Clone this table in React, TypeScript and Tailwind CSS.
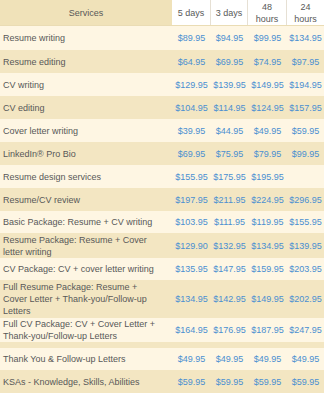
import React from "react";

type Row = { name: React.ReactNode; prices: string[]; h: string };

const rows: Row[] = [
  { name: "Resume writing", prices: ["$89.95", "$94.95", "$99.95", "$134.95"], h: "h-[24px]" },
  { name: "Resume editing", prices: ["$64.95", "$69.95", "$74.95", "$97.95"], h: "h-[23px]" },
  { name: "CV writing", prices: ["$129.95", "$139.95", "$149.95", "$194.95"], h: "h-[23px]" },
  { name: "CV editing", prices: ["$104.95", "$114.95", "$124.95", "$157.95"], h: "h-[23px]" },
  { name: "Cover letter writing", prices: ["$39.95", "$44.95", "$49.95", "$59.95"], h: "h-[23px]" },
  { name: "LinkedIn® Pro Bio", prices: ["$69.95", "$75.95", "$79.95", "$99.95"], h: "h-[23px]" },
  { name: "Resume design services", prices: ["$155.95", "$175.95", "$195.95", ""], h: "h-[23px]" },
  { name: "Resume/CV review", prices: ["$197.95", "$211.95", "$224.95", "$296.95"], h: "h-[23px]" },
  { name: "Basic Package: Resume + CV writing", prices: ["$103.95", "$111.95", "$119.95", "$155.95"], h: "h-[22px]" },
  {
    name: (
      <>
        Resume Package: Resume + Cover
        <br />
        letter writing
      </>
    ),
    prices: ["$129.90", "$132.95", "$134.95", "$139.95"],
    h: "h-[25px]",
  },
  { name: "CV Package: CV + cover letter writing", prices: ["$135.95", "$147.95", "$159.95", "$203.95"], h: "h-[22px]" },
  {
    name: (
      <>
        Full Resume Package: Resume +
        <br />
        Cover Letter + Thank-you/Follow-up
        <br />
        Letters
      </>
    ),
    prices: ["$134.95", "$142.95", "$149.95", "$202.95"],
    h: "h-[38px]",
  },
  {
    name: (
      <>
        Full CV Package: CV + Cover Letter +
        <br />
        Thank-you/Follow-up Letters
      </>
    ),
    prices: ["$164.95", "$176.95", "$187.95", "$247.95"],
    h: "h-[24px]",
  },
  { name: "", prices: ["", "", "", ""], h: "h-[6px]" },
  { name: "Thank You & Follow-up Letters", prices: ["$49.95", "$49.95", "$49.95", "$49.95"], h: "h-[22px]" },
  { name: "KSAs - Knowledge, Skills, Abilities", prices: ["$59.95", "$59.95", "$59.95", "$59.95"], h: "h-[23px]" },
];

const cols = "grid grid-cols-[172px_39px_37px_39px_37px]";

export default function App() {
  return (
    <div
      className="w-[324px] h-[393px] overflow-hidden bg-[#fef6e3] text-[9px] leading-[12px] text-[#585858]"
      style={{ fontFamily: '"Liberation Sans", Arial, sans-serif' }}
    >
      <div className={`${cols} h-[26px] border-b border-[#eadcb4]`}>
        <div className="bg-[#f0e2b9] flex items-center justify-center">Services</div>
        <div className="bg-white flex items-center justify-center text-center border-r border-[#e6e0d4]">5 days</div>
        <div className="bg-white flex items-center justify-center text-center border-r border-[#e6e0d4]">3 days</div>
        <div className="bg-white flex items-center justify-center text-center border-r border-[#e6e0d4]">
          48
          <br />
          hours
        </div>
        <div className="bg-white flex items-center justify-center text-center">
          24
          <br />
          hours
        </div>
      </div>
      {rows.map((r, i) => (
        <div
          key={i}
          className={`${cols} ${r.h} ${i % 2 === 0 ? "bg-[#fef6e3]" : "bg-[#f3e6c2]"}`}
        >
          <div className="flex items-center pl-[3px] whitespace-nowrap">{r.name ? <span>{r.name}</span> : null}</div>
          {r.prices.map((p, j) => (
            <div key={j} className="flex items-center justify-center text-[#4a8fd1] whitespace-nowrap">
              {p}
            </div>
          ))}
        </div>
      ))}
    </div>
  );
}
